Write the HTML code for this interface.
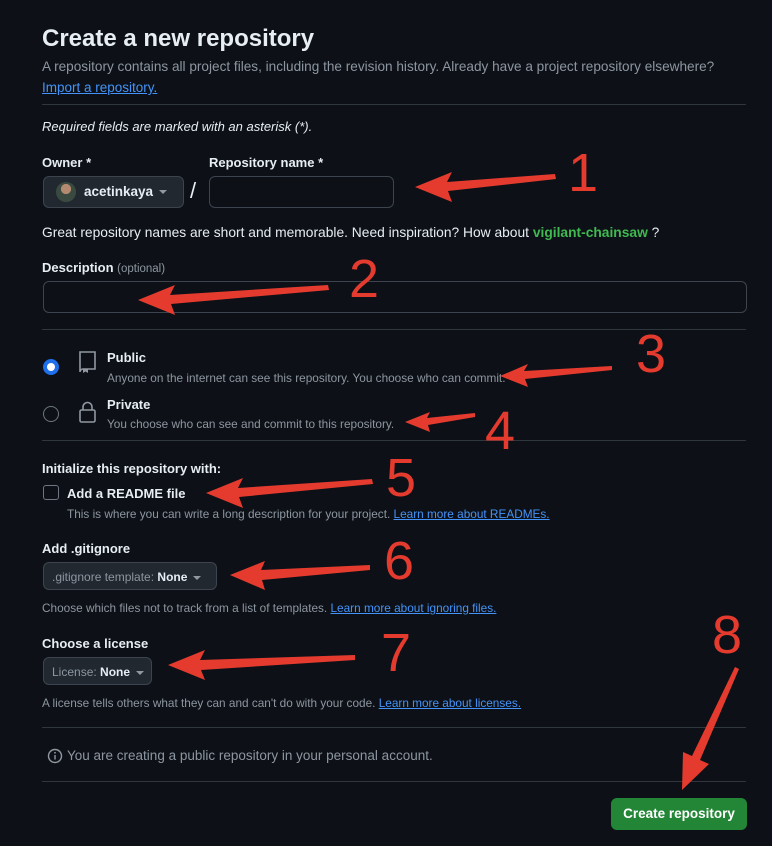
<!DOCTYPE html>
<html><head><meta charset="utf-8"><style>
*{box-sizing:border-box;margin:0;padding:0}
body{width:772px;height:846px;background:#0d1117;color:#e6edf3;font-family:"Liberation Sans",Arial,sans-serif;font-size:13px;position:relative;overflow:hidden}
.a{position:absolute;white-space:nowrap}
.m{color:#8d96a0}
.b{font-weight:bold}
.lk{color:#4493f8;text-decoration:underline}
.hr{position:absolute;left:42px;width:704px;height:1px;background:#30363d}
.box{position:absolute;border:1px solid #3d444d;border-radius:6px;background:#0d1117}
.btn{position:absolute;border:1px solid #3d444d;border-radius:6px;background:#212830;font-size:12px}
.car{display:inline-block;width:0;height:0;border-left:4px solid transparent;border-right:4px solid transparent;border-top:4px solid #9198a1;vertical-align:middle;margin-left:6px}
.num{position:absolute;color:#e53b2f;font-size:54px;font-family:"Liberation Sans",sans-serif;line-height:1}
.s{font-size:11.8px}
</style></head><body>
<div class="a" style="left:42px;top:25px;font-size:24px;font-weight:bold">Create a new repository</div>
<div class="a m" style="left:42px;top:59px;font-size:13.6px">A repository contains all project files, including the revision history. Already have a project repository elsewhere?</div>
<div class="a lk" style="left:42px;top:80px;font-size:13.5px">Import a repository.</div>
<div class="hr" style="top:104px"></div>
<div class="a" style="left:42px;top:119px;font-style:italic">Required fields are marked with an asterisk (*).</div>
<div class="a b" style="left:42px;top:155px">Owner *</div>
<div class="a b" style="left:209px;top:155px">Repository name *</div>
<div class="btn" style="left:43px;top:176px;width:141px;height:32px;font-size:13.5px;font-weight:bold;padding:7px 0 0 40px">acetinkaya<span class="car"></span></div>
<div class="a" style="left:56px;top:182px;width:20px;height:20px;border-radius:50%;background:radial-gradient(circle at 50% 35%,#b38a70 0 30%,#3a4a40 32%)"></div>
<div class="a" style="left:190px;top:178px;font-size:22px">/</div>
<div class="box" style="left:209px;top:176px;width:185px;height:32px"></div>
<div class="a" style="left:42px;top:225px;font-size:13.8px">Great repository names are short and memorable. Need inspiration? How about <span class="b" style="color:#3fb950">vigilant-chainsaw</span> ?</div>
<div class="a b" style="left:42px;top:260px">Description <span class="m" style="font-weight:normal;font-size:11.5px">(optional)</span></div>
<div class="box" style="left:43px;top:281px;width:704px;height:32px"></div>
<div class="hr" style="top:329px"></div>
<div class="a" style="left:43px;top:331px;width:16px;height:16px;border-radius:50%;background:#1f6feb;top:359px"></div>
<div class="a" style="left:47px;top:363px;width:8px;height:8px;border-radius:50%;background:#fff"></div>
<svg class="a" style="left:77px;top:350px" width="22" height="24" viewBox="0 0 22 24"><path d="M3 2h15v17H6a3 3 0 0 0-3 3V2z" fill="none" stroke="#9198a1" stroke-width="1.6"/><path d="M6 19h5v4l-2.5-1.5L6 23z" fill="#9198a1"/></svg>
<div class="a b" style="left:107px;top:350px">Public</div>
<div class="a m s" style="left:107px;top:371px">Anyone on the internet can see this repository. You choose who can commit.</div>
<div class="a" style="left:43px;top:406px;width:16px;height:16px;border-radius:50%;border:1px solid #6e7681"></div>
<svg class="a" style="left:78px;top:400px" width="20" height="24" viewBox="0 0 20 24"><rect x="2" y="10" width="15" height="12" rx="1.5" fill="none" stroke="#9198a1" stroke-width="1.6"/><path d="M5 10V7a4.5 4.5 0 0 1 9 0v3" fill="none" stroke="#9198a1" stroke-width="1.6"/></svg>
<div class="a b" style="left:107px;top:397px">Private</div>
<div class="a m s" style="left:107px;top:417px">You choose who can see and commit to this repository.</div>
<div class="hr" style="top:440px"></div>
<div class="a b" style="left:42px;top:461px">Initialize this repository with:</div>
<div class="a" style="left:43px;top:485px;width:16px;height:15px;border:1px solid #6e7681;border-radius:3px"></div>
<div class="a b" style="left:67px;top:486px">Add a README file</div>
<div class="a m s" style="left:67px;top:507px">This is where you can write a long description for your project. <span class="lk">Learn more about READMEs.</span></div>
<div class="a b" style="left:42px;top:541px">Add .gitignore</div>
<div class="btn" style="left:43px;top:562px;width:174px;height:28px;padding:7px 0 0 8px"><span class="m">.gitignore template:</span> <b>None</b><span class="car"></span></div>
<div class="a m s" style="left:42px;top:601px">Choose which files not to track from a list of templates. <span class="lk">Learn more about ignoring files.</span></div>
<div class="a b" style="left:42px;top:636px">Choose a license</div>
<div class="btn" style="left:43px;top:657px;width:109px;height:28px;padding:7px 0 0 8px"><span class="m">License:</span> <b>None</b><span class="car"></span></div>
<div class="a m s" style="left:42px;top:696px">A license tells others what they can and can't do with your code. <span class="lk">Learn more about licenses.</span></div>
<div class="hr" style="top:727px"></div>
<svg class="a" style="left:47px;top:748px" width="16" height="16" viewBox="0 0 16 16"><circle cx="8" cy="8" r="6.5" fill="none" stroke="#9198a1" stroke-width="1.4"/><rect x="7.3" y="7" width="1.4" height="4.5" fill="#9198a1"/><circle cx="8" cy="4.8" r="0.9" fill="#9198a1"/></svg>
<div class="a m" style="left:67px;top:748px;font-size:13.5px">You are creating a public repository in your personal account.</div>
<div class="hr" style="top:781px"></div>
<div class="a b" style="left:611px;top:798px;width:136px;height:32px;background:#238636;border-radius:6px;color:#fff;text-align:center;line-height:32px;font-size:13.5px">Create repository</div>
<svg class="a" style="left:0;top:0" width="772" height="846">
<g fill="#e53b2f">
<polygon points="415,187 452,172 447,182 555,174 556,179 448,191 452,202"/>
<polygon points="138,300 175,285 170,295 328,285 329,290 171,304 175,315"/>
<polygon points="500,376 528,364 524,371 612,366 612,370 525,379 528,387"/>
<polygon points="405,422 430,412 427,418 475,413 475,417 428,425 430,432"/>
<polygon points="206,493 243,478 238,488 372,479 373,484 239,497 243,508"/>
<polygon points="230,575 265,561 261,570 370,565 370,570 262,580 265,590"/>
<polygon points="168,665 205,650 200,660 355,655 355,660 201,670 205,680"/>
<polygon points="682,790 683,752 692,756 735,667 739,669 700,760 709,764"/>
</g></svg>
<div class="num" style="left:568px;top:146px">1</div>
<div class="num" style="left:349px;top:252px">2</div>
<div class="num" style="left:636px;top:327px">3</div>
<div class="num" style="left:485px;top:404px">4</div>
<div class="num" style="left:386px;top:451px">5</div>
<div class="num" style="left:384px;top:534px">6</div>
<div class="num" style="left:381px;top:626px">7</div>
<div class="num" style="left:712px;top:608px">8</div>
</body></html>
